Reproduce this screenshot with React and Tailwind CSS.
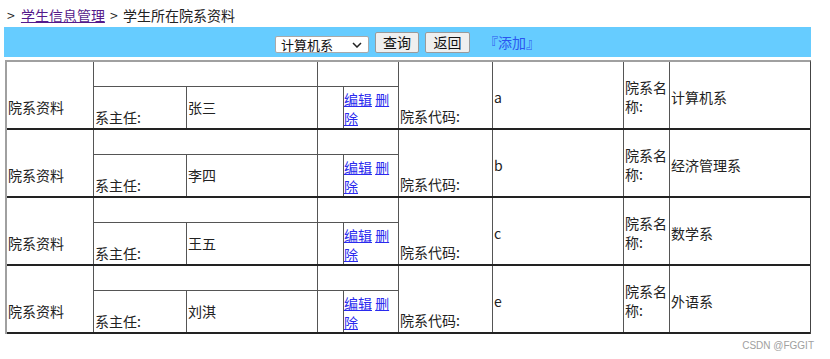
import React from "react";

const rows = [
  { head: "张三", code: "a", name: "计算机系" },
  { head: "李四", code: "b", name: "经济管理系" },
  { head: "王五", code: "c", name: "数学系" },
  { head: "刘淇", code: "e", name: "外语系" },
];

const font = { fontFamily: '"Noto Sans CJK SC", "Noto Sans", sans-serif' };

function Row({ r }) {
  return (
    <div className="flex h-[68px] border-b-2 border-[#222]">
      <div className="w-[87px] shrink-0 border-r border-[#555] pl-px pt-[36px]">院系资料</div>
      <div className="w-[305px] shrink-0 border-r border-[#555] flex flex-col">
        <div className="flex h-[25px] border-b border-[#555]">
          <div className="w-[224px] border-r border-[#555]"></div>
          <div className="w-[80px]"></div>
        </div>
        <div className="flex flex-1">
          <div className="w-[93px] border-r border-[#555] pl-px pt-[21px]">系主任:</div>
          <div className="w-[131px] border-r border-[#555] pl-px pt-[11px]">{r.head}</div>
          <div className="w-[26px] border-r border-[#555]"></div>
          <div className="w-[54px] pt-[3px]">
            <a href="#" className="text-[#2a2aee] underline">编辑</a>{" "}
            <a href="#" className="text-[#2a2aee] underline">删除</a>
          </div>
        </div>
      </div>
      <div className="w-[94px] shrink-0 border-r border-[#555] pl-px pt-[45px]">院系代码:</div>
      <div className="w-[131px] shrink-0 border-r border-[#555] pl-px pt-[26px]">{r.code}</div>
      <div className="w-[46px] shrink-0 border-r border-[#555] pl-px pt-[16px]">院系名称:</div>
      <div className="w-[140px] shrink-0 pl-px pt-[26px]">{r.name}</div>
    </div>
  );
}

export default function App() {
  return (
    <div className="relative w-[830px] h-[359px] bg-white text-[14px] leading-[19px] text-[#222]" style={font}>
      <div className="h-[27px] pl-[7px] pt-[6px]">
        <span className="mr-[3px]">&gt;</span> <a href="#" className="text-[#551a8b] underline">学生信息管理</a>{" "}
        <span className="mx-[2px]">&gt;</span> 学生所在院系资料
      </div>
      <div className="ml-[4px] w-[807px] h-[30px] bg-[#66ccff] flex items-center justify-center pr-[7px]">
        <div className="mt-[5px] w-[94px] h-[17px] bg-white border border-[#a9a9a9] rounded-[2px] flex items-center justify-between pl-[5px] pr-[5px] text-[13px] leading-[15px] text-[#111]">
          <span>计算机系</span>
          <svg width="10" height="6" viewBox="0 0 10 6" className="mr-[1px]">
            <path d="M1 1 L5 5 L9 1" fill="none" stroke="#222" strokeWidth="1.5" />
          </svg>
        </div>
        <button className="ml-[6px] w-[44px] h-[21px] bg-[#efefef] border border-[#9a9a9a] rounded-[2px] text-[14px] leading-[17px] text-[#111]">查询</button>
        <button className="ml-[6px] w-[45px] h-[21px] bg-[#efefef] border border-[#9a9a9a] rounded-[2px] text-[14px] leading-[17px] text-[#111]">返回</button>
        <a href="#" className="ml-[21px] text-[#2a55f0] whitespace-nowrap">
          <span className="-ml-[7px]">『</span>添加<span className="-mr-[7px]">』</span>
        </a>
      </div>
      <div className="mt-[3px] ml-[5px] w-[806px] border-t-2 border-l-2 border-r border-t-[#a0a0a0] border-l-[#a0a0a0] border-r-[#444]">
        {rows.map((r, i) => (
          <Row key={i} r={r} />
        ))}
      </div>
      <div className="absolute right-[16px] bottom-[7px] text-[10px] leading-[12px] text-[#a0a0a0]" style={{ fontFamily: '"Liberation Sans", Arial, sans-serif' }}>
        CSDN @FGGIT
      </div>
    </div>
  );
}
